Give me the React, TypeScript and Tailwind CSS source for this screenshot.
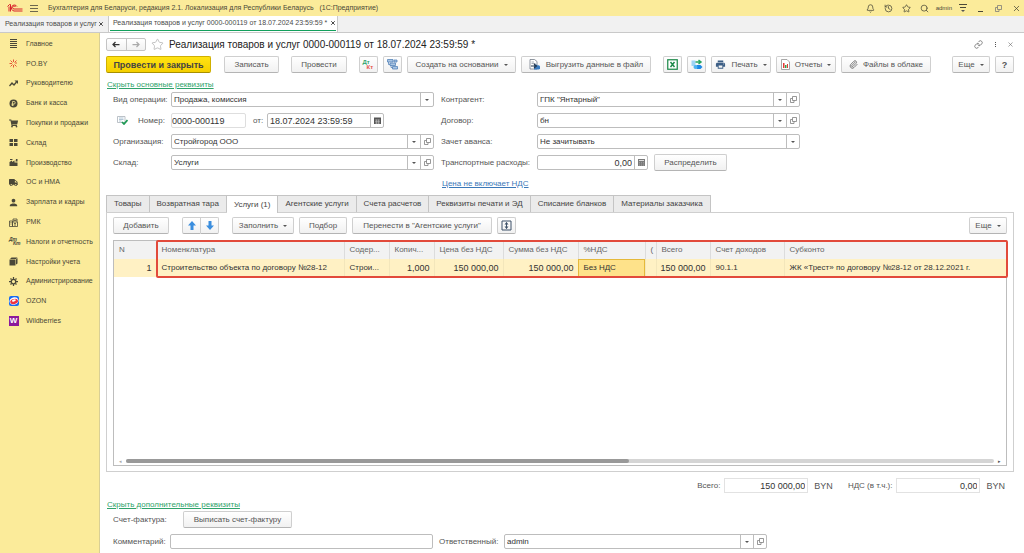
import React from 'react';
import clsx from 'clsx';
import { FaTruck, FaShoppingCart } from 'react-icons/fa';
import { MdPerson, MdPrint } from 'react-icons/md';
import { Bell, History, Star, Search, Link as LinkIcon, Paperclip, X } from 'lucide-react';

const LogoIcon = () => (
  <svg className="h-[10px] w-4" viewBox="0 0 32 20" fill="none" stroke="#d8232a" strokeWidth="2">
    <path d="M1 7 L5 3 H7 V17 M4 7 V17" />
    <path d="M20 7 A6 6 0 1 0 14 16 H31" />
    <path d="M17 8 A3 3 0 1 0 14 12 H31" />
  </svg>
);

const LinesIcon = () => (
  <svg className="size-[9px]" viewBox="0 0 9 9" fill="#4a4838">
    <path d="M1 0h7v1H1zM1 2h7v1H1zM1 4h7v1H1zM1 6h7v1H1zM1 8h7v1H1z" />
  </svg>
);

const BurstIcon = () => (
  <svg className="size-[9px]" viewBox="0 0 18 18" stroke="#e2462c" strokeWidth="1.800" fill="none">
    <path d="M9 1v5M9 12v5M1 9h5M3 3l4 4M15 3l-4 4M3 15l4-4M15 15l-4-4M12 8h4" />
  </svg>
);

const TrendIcon = () => (
  <svg className="size-[9px]" viewBox="0 0 18 18" fill="none" stroke="#4a4838" strokeWidth="2.500">
    <path d="M1 14l5-6 4 4 5-6" />
    <path d="M11 3h7v7z" fill="#4a4838" stroke="none" />
  </svg>
);

const RubleIcon = () => (
  <svg className="size-[9px]" viewBox="0 0 18 18">
    <circle cx="9" cy="9" r="8" fill="#4a4838" />
    <path d="M7 14V5h3a2.500 2.500 0 0 1 0 5H5M5 12h5" stroke="#fbeb9a" strokeWidth="1.500" fill="none" />
  </svg>
);

const StockIcon = () => (
  <svg className="size-[9px]" viewBox="0 0 18 18" fill="#4a4838">
    <path d="M1 2h7v6H1zM10 2h7v6h-7zM1 10h7v6H1zM10 10h7v6h-7z" />
  </svg>
);

const FactoryIcon = () => (
  <svg className="size-[9px]" viewBox="0 0 18 18" fill="#4a4838">
    <path d="M1 16V8l5-3v3l5-3v4h6v7z" />
    <path d="M13 7l1-5h3v5zM2 2h5v2H2z" />
  </svg>
);

const RegisterIcon = () => (
  <svg className="size-[9px]" viewBox="0 0 18 18" fill="none" stroke="#4a4838" strokeWidth="1.600">
    <path d="M1 6h6v11H1zM7 8h10v9H7zM8 8V2h8v6M9 5h6M3 9h2M3 12h2M10 11h4M10 14h4" />
  </svg>
);

const BooksIcon = () => (
  <svg className="size-[9px]" viewBox="0 0 18 18" fill="#4a4838">
    <path d="M1 5h12v12H1z" />
    <path d="M2 4l3-3h12l-3 3zM14 15V5l3-3v11z" />
  </svg>
);

const GearIcon = () => (
  <svg className="size-[9px]" viewBox="0 0 18 18" fill="none" stroke="#4a4838">
    <circle cx="9" cy="9" r="4.500" strokeWidth="2.500" />
    <path d="M9 0v4M9 14v4M0 9h4M14 9h4M3 3l2 2M13 13l2 2M15 3l-2 2M5 13l-2 2" strokeWidth="2.500" />
  </svg>
);

const TaxIcon = () => (
  <span className="relative block size-[9px] text-[5px] font-bold italic leading-none">
    <span className="absolute left-0 top-0">Дт</span>
    <span className="absolute left-1 top-1">Кт</span>
  </span>
);

const OzonIcon = () => (
  <svg className="size-[10px]" viewBox="0 0 20 20">
    <rect width="20" height="20" rx="4" fill="#1769f2" />
    <ellipse cx="10" cy="10" rx="9" ry="7.500" fill="#fff" transform="rotate(-15 10 10)" />
    <ellipse cx="10" cy="11" rx="8" ry="5" fill="#ef3340" transform="rotate(-15 10 10)" />
    <ellipse cx="10" cy="9" rx="4" ry="2" fill="#fff" transform="rotate(-15 10 10)" />
  </svg>
);

const WbIcon = () => (
  <span className="flex size-[10px] items-center justify-center bg-[#8b1a9b] text-[8px] font-bold leading-none text-white">W</span>
);

const DtKtIcon = () => (
  <span className="relative block h-[11px] w-3 text-[6px] font-bold leading-none">
    <span className="absolute left-0 top-0 text-[#2fa36b]">Дт</span>
    <span className="absolute left-1 top-[5px] text-[#e5534b]">Кт</span>
  </span>
);

const TreeIcon = () => (
  <svg className="size-[11px]" viewBox="0 0 22 22" fill="#a9c5e4" stroke="#4f7fb5" strokeWidth="1.500">
    <path d="M3 5v6h4M8 10v7h4" fill="none" />
    <path d="M1 1h11v5H1zM6 8h11v5H6zM11 15h10v5H11zM14 2h6v4h-6z" />
  </svg>
);

const ExportIcon = () => (
  <svg className="h-[11px] w-3" viewBox="0 0 24 22">
    <path d="M2 1h9l5 4v15H2z" fill="#fff" stroke="#6b7480" strokeWidth="1.500" />
    <path d="M5 6h5M5 9h8" stroke="#8b95a1" strokeWidth="1.500" />
    <path d="M10 13c2-3 6-3 7 0 3-2 6 1 5 4v3l-3 1h-9z" fill="#3b7cc0" />
    <path d="M4 14h9M10 10l5 4-5 4" stroke="#23374d" strokeWidth="2.200" fill="none" />
  </svg>
);

const ExcelIcon = () => (
  <svg className="size-[11px]" viewBox="0 0 22 22" fill="none" stroke="#1f8a4c">
    <rect x="1.500" y="1.500" width="19" height="19" strokeWidth="2.500" fill="#fff" />
    <path d="M7 6l8 10M15 6L7 16" strokeWidth="3" />
  </svg>
);

const ExchangeIcon = () => (
  <svg className="h-[11px] w-3" viewBox="0 0 24 22">
    <path d="M1 3h8v11H1z" fill="#9fd4f4" />
    <path d="M9 6h9M15 2l5 4-5 4" stroke="#27a560" strokeWidth="3" fill="none" />
    <path d="M11 12h8l4 4-4 4h-8z" fill="#1e88e5" />
    <circle cx="9" cy="16" r="4" fill="#4db2f0" />
  </svg>
);

const ReportIcon = () => (
  <svg className="h-[11px] w-[9px]" viewBox="0 0 18 22">
    <path d="M1 1h11l5 5v15H1z" fill="#fff" stroke="#8b8b8b" strokeWidth="1.500" />
    <path d="M4 8h3v10H4z" fill="#e53935" />
    <path d="M8 12h3v6H8z" fill="#2fa34f" />
    <path d="M12 10h2v8h-2z" fill="#e53935" />
  </svg>
);

const RowHeightIcon = () => (
  <svg className="size-[11px]" viewBox="0 0 22 22" fill="none" stroke="#3d5168" strokeWidth="2">
    <path d="M2 2h18v18H2z" />
    <path d="M11 5v12" />
    <path d="M7 9l4-5 4 5zM7 13l4 5 4-5z" fill="#3d5168" stroke="none" />
  </svg>
);

const CalendarIcon = () => (
  <svg className="size-[7px]" viewBox="0 0 14 14">
    <path d="M0 1h14v13H0z" fill="#555" />
    <path d="M2 6h10M2 9h10M2 12h10M5 5v9M9 5v9" stroke="#ccc" strokeWidth="1" />
  </svg>
);

const CalcIcon = () => (
  <svg className="size-[7px]" viewBox="0 0 14 14">
    <path d="M0 0h14v14H0z" fill="#7a7a7a" />
    <path d="M2 3h10" stroke="#ddd" strokeWidth="2" />
    <path d="M2 7h10M2 10h10M2 12.500h10" stroke="#bbb" strokeDasharray="2 2" />
  </svg>
);

const PostedIcon = () => (
  <svg className="h-[9px] w-[11px]" viewBox="0 0 22 18" fill="none">
    <path d="M1 1h15v12H1z" fill="#fff" stroke="#a5aeb5" strokeWidth="1.500" />
    <path d="M4 4h9M4 7h9M4 10h5" stroke="#9ab4c8" strokeWidth="1.500" />
    <path d="M10 12l4 4 7-8" stroke="#1f9a55" strokeWidth="3.500" />
  </svg>
);

const OpenIcon = () => (
  <svg className="size-[7px]" viewBox="0 0 14 14" fill="none" stroke="#777" strokeWidth="1.500">
    <path d="M5 1h8v8H5z" />
    <path d="M5 5H1v8h7V9" />
  </svg>
);

// Horizontal navigation arrow, points left
const NavArrow = ({ className }: { className?: string }) => (
  <svg className={clsx('h-[7px] w-2', className)} viewBox="0 0 16 14" fill="none" stroke="currentColor" strokeWidth="2.500">
    <path d="M15 7H3M7 2L2 7l5 5" />
  </svg>
);

// Fat blue arrow of the row toolbar, points up
const MoveArrow = ({ className }: { className?: string }) => (
  <svg className={clsx('h-[9px] w-2', className)} viewBox="0 0 16 18" fill="#3b8ede">
    <path d="M8 0l8 9h-5v9H5V9H0z" />
  </svg>
);

const Caret = () => (
  <svg className="h-[2px] w-1 shrink-0" viewBox="0 0 4 2" fill="#555">
    <path d="M0 0h4L2 2z" />
  </svg>
);

const sections = [
  { label: 'Главное', icon: <LinesIcon /> },
  { label: 'PO.BY', icon: <BurstIcon /> },
  { label: 'Руководителю', icon: <TrendIcon /> },
  { label: 'Банк и касса', icon: <RubleIcon /> },
  { label: 'Покупки и продажи', icon: <FaShoppingCart className="size-[9px]" /> },
  { label: 'Склад', icon: <StockIcon /> },
  { label: 'Производство', icon: <FactoryIcon /> },
  { label: 'ОС и НМА', icon: <FaTruck className="size-[9px]" /> },
  { label: 'Зарплата и кадры', icon: <MdPerson className="size-[11px]" /> },
  { label: 'РМК', icon: <RegisterIcon /> },
  { label: 'Налоги и отчетность', icon: <TaxIcon /> },
  { label: 'Настройки учета', icon: <BooksIcon /> },
  { label: 'Администрирование', icon: <GearIcon /> },
  { label: 'OZON', icon: <OzonIcon /> },
  { label: 'Wildberries', icon: <WbIcon /> },
];

const tabs = [
  'Товары',
  'Возвратная тара',
  'Услуги (1)',
  'Агентские услуги',
  'Счета расчетов',
  'Реквизиты печати и ЭД',
  'Списание бланков',
  'Материалы заказчика',
];

interface Column {
  title: string;
  value: string;
  width: string;
  numeric?: boolean;
  active?: boolean;
}

const columns: Column[] = [
  { title: 'N', value: '1', width: 'w-[42px]', numeric: true },
  { title: 'Номенклатура', value: 'Строительство объекта по договору №28-12', width: 'w-[188px]' },
  { title: 'Содер...', value: 'Строи...', width: 'w-[45px]' },
  { title: 'Копич...', value: '1,000', width: 'w-[45px]', numeric: true },
  { title: 'Цена без НДС', value: '150 000,00', width: 'w-[69px]', numeric: true },
  { title: 'Сумма без НДС', value: '150 000,00', width: 'w-[75px]', numeric: true },
  { title: '%НДС', value: 'Без НДС', width: 'w-[67px]', active: true },
  { title: '(', value: '', width: 'w-[11px]' },
  { title: 'Всего', value: '150 000,00', width: 'w-[54px]', numeric: true },
  { title: 'Счет доходов', value: '90.1.1', width: 'w-[74px]' },
  { title: 'Субконто', value: 'ЖК «Трест» по договору №28-12 от 28.12.2021 г.', width: '' },
];

interface ButtonProps {
  children: React.ReactNode;
  className?: string;
  label?: string;
  caret?: boolean;
}

const Button: React.FC<ButtonProps> = ({ children, className, label, caret }) => (
  <button
    type="button"
    aria-label={label}
    className={clsx(
      'flex h-[17px] shrink-0 items-center justify-center gap-[5px] whitespace-nowrap rounded-xs border border-[#cfcfcf] border-b-[#b4b4b4] bg-linear-to-b from-white to-[#f1f1f1] text-[#555]',
      className,
    )}
  >
    {children}
    {caret && <Caret />}
  </button>
);

interface ComboProps {
  id: string;
  value: string;
  open?: boolean;
}

const Combo: React.FC<ComboProps> = ({ id, value, open }) => (
  <div className="flex h-[15px] w-[263px] rounded-xs border border-[#bdbdbd] bg-white">
    <div className="relative flex min-w-0 flex-1">
      <select id={id} className="w-full appearance-none bg-transparent pl-0.5 text-[#333] outline-none">
        <option>{value}</option>
      </select>
      <span className="pointer-events-none absolute inset-y-0 right-0 flex w-[13px] items-center justify-center border-l border-[#bdbdbd]">
        <Caret />
      </span>
    </div>
    {open && (
      <button type="button" aria-label="Открыть" className="flex w-[13px] items-center justify-center border-l border-[#bdbdbd]">
        <OpenIcon />
      </button>
    )}
  </div>
);

const FieldRow: React.FC<{ id: string; label: string; labelWidth: string; children: React.ReactNode }> = ({ id, label, labelWidth, children }) => (
  <div className="flex h-[15px] items-center">
    <label htmlFor={id} className={clsx('shrink-0 whitespace-nowrap', labelWidth)}>{label}</label>
    {children}
  </div>
);

const TopBar = () => (
  <header className="flex h-4 items-center bg-[#fbeb9a] pl-[7px] pr-[3px] text-[7px] text-[#4a4838]">
    <LogoIcon />
    <button type="button" aria-label="Меню" className="ml-[7px] flex w-2 flex-col gap-[2px]">
      <span className="h-px w-full bg-[#6d684e]" />
      <span className="h-px w-full bg-[#6d684e]" />
      <span className="h-px w-full bg-[#6d684e]" />
    </button>
    <span className="ml-2.5 whitespace-pre">Бухгалтерия для Беларуси, редакция 2.1. Локализация для Республики Беларусь   (1С:Предприятие)</span>
    <div className="ml-auto flex items-center gap-[9px]">
      <button type="button" aria-label="Уведомления"><Bell className="size-[9px]" /></button>
      <button type="button" aria-label="История"><History className="size-[9px]" /></button>
      <button type="button" aria-label="Избранное"><Star className="size-[9px]" /></button>
      <button type="button" aria-label="Поиск"><Search className="size-[9px]" /></button>
      <button type="button" className="-mx-0.5 text-[6px]">admin</button>
      <button type="button" aria-label="Настройки" className="flex w-2 flex-col items-center gap-[2px]">
        <span className="h-px w-2 bg-[#4a4838]" />
        <span className="h-px w-1.5 bg-[#4a4838]" />
        <Caret />
      </button>
      <button type="button" aria-label="Свернуть" className="flex h-2 w-[9px] items-end justify-center"><span className="h-px w-[5px] bg-[#4a4838]" /></button>
      <button type="button" aria-label="Развернуть" className="flex w-[9px] justify-center"><OpenIcon /></button>
      <button type="button" aria-label="Закрыть"><X className="size-[9px]" /></button>
    </div>
  </header>
);

const WindowTabs = () => (
  <div className="flex h-[17px] items-stretch border-b border-[#c9c9c9] bg-[#f1f1f1] text-[7px] text-[#4a4a4a]">
    <button type="button" className="flex w-[109px] items-center justify-between border-r border-[#c9c9c9] pl-[5px] pr-1">
      <span className="whitespace-nowrap">Реализация товаров и услуг</span>
      <X className="size-[6px]" strokeWidth={4} />
    </button>
    <button type="button" className="flex border-r border-[#c9c9c9] bg-white px-px pb-px">
      <span className="flex h-full items-center gap-[3px] border-b border-[#12a05c] pl-[3px]">
        <span className="whitespace-nowrap">Реализация товаров и услуг 0000-000119 от 18.07.2024 23:59:59 *</span>
        <X className="size-[6px]" strokeWidth={4} />
      </span>
    </button>
  </div>
);

const Sidebar = () => (
  <nav className="w-[100px] shrink-0 border-r border-[#d9cf95] bg-[#fbeb9a] pt-px text-[7px] text-[#4a4838]">
    <div className="grid h-[297px] auto-rows-fr">
      {sections.map((section) => (
        <a key={section.label} href="#" className="flex items-center gap-[7px] whitespace-nowrap pl-2">
          <span className="flex w-[11px] justify-center">{section.icon}</span>
          {section.label}
        </a>
      ))}
    </div>
  </nav>
);

const DocumentHeader = () => (
  <>
    <div className="flex h-[23px] items-center">
      <div className="flex h-[13px] w-10 rounded-xs border border-[#c4c4c4] bg-linear-to-b from-white to-[#f1f1f1]">
        <button type="button" aria-label="Назад" className="flex flex-1 items-center justify-center border-r border-[#c4c4c4] text-[#333]"><NavArrow /></button>
        <button type="button" aria-label="Вперед" className="flex flex-1 items-center justify-center text-[#aaa]"><NavArrow className="rotate-180" /></button>
      </div>
      <Star className="ml-[5px] size-[13px] text-[#b5b5b5]" strokeWidth={1.5} />
      <h1 className="ml-[5px] whitespace-nowrap text-[10px] text-[#222]">Реализация товаров и услуг 0000-000119 от 18.07.2024 23:59:59 *</h1>
      <div className="ml-auto flex items-center gap-2 text-[#666]">
        <button type="button" aria-label="Ссылка"><LinkIcon className="size-[9px]" /></button>
        <button type="button" aria-label="Еще" className="flex w-2 flex-col items-center gap-px">
          <span className="size-px bg-[#555]" />
          <span className="size-px bg-[#555]" />
          <span className="size-px bg-[#555]" />
        </button>
        <button type="button" aria-label="Закрыть"><X className="size-[7px]" /></button>
      </div>
    </div>
    <div className="flex items-center">
      <button type="button" className="h-[17px] w-[105px] whitespace-nowrap rounded-xs border border-[#d0b000] border-b-[#a89000] bg-linear-to-b from-[#ffe312] to-[#f5cf00] text-[9px] font-bold text-[#444]">
        Провести и закрыть
      </button>
      <Button className="ml-[13px] w-[55px]">Записать</Button>
      <Button className="ml-3 w-14">Провести</Button>
      <Button className="ml-3 w-[19px]" label="Дт/Кт"><DtKtIcon /></Button>
      <Button className="ml-[5px] w-[19px]" label="Структура"><TreeIcon /></Button>
      <Button className="ml-[5px] w-[109px]" caret>Создать на основании</Button>
      <Button className="ml-[5px] w-[130px]"><ExportIcon />Выгрузить данные в файл</Button>
      <Button className="ml-3 w-[19px]" label="Excel"><ExcelIcon /></Button>
      <Button className="ml-[5px] w-[19px]" label="Обмен"><ExchangeIcon /></Button>
      <Button className="ml-[5px] w-[60px]" caret><MdPrint className="size-[11px] text-[#3d5f86]" />Печать</Button>
      <Button className="ml-[5px] w-[60px]" caret><ReportIcon />Отчеты</Button>
      <Button className="ml-[5px] w-[90px]"><Paperclip className="size-[9px]" />Файлы в облаке</Button>
      <Button className="ml-auto w-[38px]" caret>Еще</Button>
      <Button className="ml-[5px] w-[19px] text-[9px] font-bold">?</Button>
    </div>
  </>
);

const MainFields = () => (
  <div className="flex gap-[7px] pl-[7px] pt-0.5">
    <div className="flex flex-col gap-1.5">
      <FieldRow id="operation" label="Вид операции:" labelWidth="w-[58px]">
        <Combo id="operation" value="Продажа, комиссия" />
      </FieldRow>
      <div className="flex h-[15px] items-center">
        <span className="flex w-[25px] pl-1"><PostedIcon /></span>
        <label htmlFor="number" className="w-[33px]">Номер:</label>
        <input id="number" defaultValue="0000-000119" className="h-[15px] w-[75px] rounded-xs border border-[#dedede] text-[9px] text-[#333]" />
        <label htmlFor="date" className="ml-[7px] w-[14px]">от:</label>
        <div className="flex h-[15px] w-[117px] rounded-xs border border-[#bdbdbd]">
          <input id="date" defaultValue="18.07.2024 23:59:59" className="min-w-0 flex-1 pl-0.5 text-[9px] text-[#333]" />
          <button type="button" aria-label="Календарь" className="flex w-[13px] items-center justify-center border-l border-[#bdbdbd]"><CalendarIcon /></button>
        </div>
      </div>
      <FieldRow id="organization" label="Организация:" labelWidth="w-[58px]">
        <Combo id="organization" value="Стройгород ООО" open />
      </FieldRow>
      <FieldRow id="warehouse" label="Склад:" labelWidth="w-[58px]">
        <Combo id="warehouse" value="Услуги" open />
      </FieldRow>
    </div>
    <div className="flex flex-col gap-1.5">
      <FieldRow id="partner" label="Контрагент:" labelWidth="w-[96px]">
        <Combo id="partner" value={'ГПК "Янтарный"'} open />
      </FieldRow>
      <FieldRow id="contract" label="Договор:" labelWidth="w-[96px]">
        <Combo id="contract" value="бн" open />
      </FieldRow>
      <FieldRow id="advance" label="Зачет аванса:" labelWidth="w-[96px]">
        <Combo id="advance" value="Не зачитывать" />
      </FieldRow>
      <FieldRow id="transport" label="Транспортные расходы:" labelWidth="w-[96px]">
        <div className="flex h-[15px] w-[111px] rounded-xs border border-[#bdbdbd]">
          <input id="transport" defaultValue="0,00" className="min-w-0 flex-1 pr-0.5 text-right text-[9px] text-[#333]" />
          <button type="button" aria-label="Калькулятор" className="flex w-[13px] items-center justify-center border-l border-[#bdbdbd]"><CalcIcon /></button>
        </div>
        <Button className="ml-1.5 w-[73px]">Распределить</Button>
      </FieldRow>
      <a href="#" className="h-[15px] self-start pl-px leading-[15px] text-[#3b78b8] underline">Цена не включает НДС</a>
    </div>
  </div>
);

const ServicesTable = () => (
  <div className="relative flex flex-1 flex-col border border-[#bdbdbd]">
    <table className="w-full table-fixed border-collapse text-left">
      <thead>
        <tr className="h-[18px] bg-[#f2f2f2] text-[#666]">
          {columns.map((col) => (
            <th key={col.title} className={clsx('overflow-hidden whitespace-nowrap border-r border-[#dcdcdc] p-0 pl-[5px] font-normal last:border-r-0', col.width)}>
              {col.title}
            </th>
          ))}
        </tr>
      </thead>
      <tbody>
        <tr className="h-[18px] bg-[#fff1c4] text-[#333]">
          {columns.map((col) => (
            <td
              key={col.title}
              className={clsx(
                'whitespace-nowrap border-r border-[#f3e6bb] p-0 last:border-r-0',
                col.numeric ? 'pr-1 text-right text-[9px]' : 'pl-[5px]',
                col.active && 'bg-[#fee28a] outline -outline-offset-1 outline-[#e5b93a]',
              )}
            >
              {col.value}
            </td>
          ))}
        </tr>
      </tbody>
    </table>
    <div className="pointer-events-none absolute -right-0.5 -top-px left-[42px] h-[38px] rounded-xs border-2 border-[#e24a3b]" />
    <div className="mt-auto flex h-2 items-center gap-1 px-[5px] text-[5px] leading-none">
      <span className="w-[3px] text-[#aaa]">◂</span>
      <div className="h-1 flex-1 rounded-full bg-[#d5d5d5]">
        <div className="h-1 w-[58%] rounded-full bg-[#999]" />
      </div>
      <span className="w-[3px] text-[#555]">▸</span>
    </div>
  </div>
);

const TabbedPanel = () => (
  <section className="flex h-[277px] flex-col">
    <div className="flex h-[17px] shrink-0" role="tablist">
      {tabs.map((tab, index) => (
        <button
          key={tab}
          type="button"
          role="tab"
          aria-selected={index === 2}
          className={clsx(
            'whitespace-nowrap border-r border-t border-[#c4c4c4] px-[7px] text-[#444] first:border-l',
            index === 2 ? 'z-10 -mb-px bg-white' : 'bg-[#ebebeb]',
          )}
        >
          {tab}
        </button>
      ))}
    </div>
    <div className="flex flex-1 flex-col border border-[#cfcfcf] px-1.5 pb-[5px] pt-1">
      <div className="mb-1.5 flex items-center">
        <Button className="w-14">Добавить</Button>
        <Button className="ml-[13px] w-[19px] rounded-r-none" label="Вверх"><MoveArrow /></Button>
        <Button className="w-[18px] rounded-l-none border-l-0" label="Вниз"><MoveArrow className="rotate-180" /></Button>
        <Button className="ml-[13px] w-[62px]" caret>Заполнить</Button>
        <Button className="ml-[5px] w-12">Подбор</Button>
        <Button className="ml-[5px] w-[140px]">Перенести в "Агентские услуги"</Button>
        <Button className="ml-[5px] w-[19px]" label="Высота строк"><RowHeightIcon /></Button>
        <Button className="ml-auto w-[38px]" caret>Еще</Button>
      </div>
      <ServicesTable />
    </div>
  </section>
);

const Footer = () => (
  <>
    <div className="mt-1.5 flex h-[15px] items-center justify-end pr-[9px]">
      <label htmlFor="total">Всего:</label>
      <input id="total" readOnly value="150 000,00" className="ml-1 h-[15px] w-[84px] border border-[#e2e2e2] pr-0.5 text-right text-[9px] text-[#333]" />
      <span className="ml-1.5 text-[9px]">BYN</span>
      <label htmlFor="vat" className="ml-[15px]">НДС (в т.ч.):</label>
      <input id="vat" readOnly value="0,00" className="ml-1 h-[15px] w-[84px] border border-[#e2e2e2] pr-0.5 text-right text-[9px] text-[#333]" />
      <span className="ml-1.5 text-[9px]">BYN</span>
    </div>
    <a href="#" className="ml-px mt-[5px] self-start leading-[13px] text-[#2fa36b] underline">Скрыть дополнительные реквизиты</a>
    <div className="flex items-center pl-[7px]">
      <span className="w-[70px]">Счет-фактура:</span>
      <Button className="w-[109px]">Выписать счет-фактуру</Button>
    </div>
    <div className="mt-1.5 flex items-center pl-[7px]">
      <label htmlFor="comment" className="w-[57px]">Комментарий:</label>
      <input id="comment" className="h-[15px] w-[263px] rounded-xs border border-[#bdbdbd] px-0.5" />
      <label htmlFor="responsible" className="ml-1.5 w-[65px]">Ответственный:</label>
      <Combo id="responsible" value="admin" open />
    </div>
  </>
);

const App: React.FC = () => (
  <div className="flex min-h-screen flex-col bg-white font-['Liberation_Sans',Arial,sans-serif] text-[8px] leading-[12px] text-[#555]">
    <TopBar />
    <WindowTabs />
    <div className="flex flex-1">
      <Sidebar />
      <main className="flex min-w-0 flex-1 flex-col pl-1.5 pr-2.5">
        <DocumentHeader />
        <a href="#" className="ml-px mt-1.5 self-start leading-[11px] text-[#2fa36b] underline">Скрыть основные реквизиты</a>
        <MainFields />
        <div className="mt-1">
          <TabbedPanel />
        </div>
        <Footer />
      </main>
    </div>
  </div>
);

export default App;
